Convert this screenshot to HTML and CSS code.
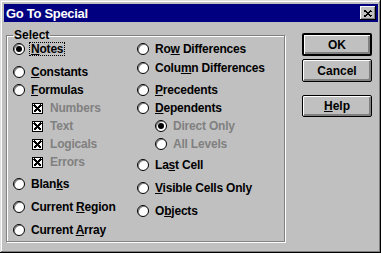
FILE: index.html
```html
<!DOCTYPE html>
<html lang="en">
<head>
    <meta charset="UTF-8">
    <title>Go To Special</title>
    <link rel="stylesheet" href="styles.css">
</head>
<body>
    <div class="window">
        <div class="titlebar">
            <span class="title">Go To Special</span>
            <span class="close-btn">
                <svg width="8" height="7" viewBox="0 0 8 7" shape-rendering="crispEdges">
                    <path d="M0.5 0.5 L7.5 6.5 M7.5 0.5 L0.5 6.5" stroke="#000" stroke-width="1.6" fill="none"/>
                </svg>
            </span>
        </div>

        <div class="client">
            <fieldset class="group">
                <legend>Select</legend>
                <div class="columns">
                    <!-- columna izquierda -->
                    <div class="col col-left">
                        <div class="opt"><span class="radio checked"></span><span class="label focus"><u>N</u>otes</span></div>
                        <div class="opt sp-5"><span class="radio"></span><span class="label"><u>C</u>onstants</span></div>
                        <div class="opt"><span class="radio"></span><span class="label"><u>F</u>ormulas</span></div>
                        <div class="opt sub-check"><span class="check"><svg width="9" height="9" viewBox="0 0 9 9" shape-rendering="crispEdges"><path d="M1 1 L8 8 M8 1 L1 8" stroke="#000" stroke-width="2" fill="none"/></svg></span><span class="label disabled">Numbers</span></div>
                        <div class="opt sub-check"><span class="check"><svg width="9" height="9" viewBox="0 0 9 9" shape-rendering="crispEdges"><path d="M1 1 L8 8 M8 1 L1 8" stroke="#000" stroke-width="2" fill="none"/></svg></span><span class="label disabled">Text</span></div>
                        <div class="opt sub-check"><span class="check"><svg width="9" height="9" viewBox="0 0 9 9" shape-rendering="crispEdges"><path d="M1 1 L8 8 M8 1 L1 8" stroke="#000" stroke-width="2" fill="none"/></svg></span><span class="label disabled">Logicals</span></div>
                        <div class="opt sub-check"><span class="check"><svg width="9" height="9" viewBox="0 0 9 9" shape-rendering="crispEdges"><path d="M1 1 L8 8 M8 1 L1 8" stroke="#000" stroke-width="2" fill="none"/></svg></span><span class="label disabled">Errors</span></div>
                        <div class="opt sp-4"><span class="radio"></span><span class="label">Blan<u>k</u>s</span></div>
                        <div class="opt sp-5"><span class="radio"></span><span class="label">Current <u>R</u>egion</span></div>
                        <div class="opt sp-5"><span class="radio"></span><span class="label">Current <u>A</u>rray</span></div>
                    </div>

                    <!-- columna derecha -->
                    <div class="col col-right">
                        <div class="opt"><span class="radio"></span><span class="label">Ro<u>w</u> Differences</span></div>
                        <div class="opt sp-1"><span class="radio"></span><span class="label">Colu<u>m</u>n Differences</span></div>
                        <div class="opt sp-4"><span class="radio"></span><span class="label"><u>P</u>recedents</span></div>
                        <div class="opt"><span class="radio"></span><span class="label"><u>D</u>ependents</span></div>
                        <div class="opt sub-radio"><span class="radio checked"></span><span class="label disabled">Direct Only</span></div>
                        <div class="opt sub-radio"><span class="radio"></span><span class="label disabled">All Levels</span></div>
                        <div class="opt sp-3"><span class="radio"></span><span class="label">La<u>s</u>t Cell</span></div>
                        <div class="opt sp-5"><span class="radio"></span><span class="label"><u>V</u>isible Cells Only</span></div>
                        <div class="opt sp-5"><span class="radio"></span><span class="label">O<u>b</u>jects</span></div>
                    </div>
                </div>
            </fieldset>

            <div class="buttons">
                <button class="btn default">OK</button>
                <button class="btn">Cancel</button>
                <button class="btn help"><u>H</u>elp</button>
            </div>
        </div>
    </div>
</body>
</html>
```

FILE: styles.css
```css
/* Estilos generales */
body {
    margin: 0;
    padding: 0;
    background-color: #c0c0c0;
    font-family: "Liberation Sans", Arial, sans-serif;
    font-size: 12px;
    font-weight: bold;
    color: #000;
}

/* Ventana */
.window {
    width: 381px;
    height: 253px;
    box-sizing: border-box;
    padding: 4px 3px 3px 4px;
    background-color: #c0c0c0;
    box-shadow: inset -1px -1px 0 #000, inset 1px 1px 0 #dfdfdf,
                inset -2px -2px 0 #808080, inset 2px 2px 0 #fff;
    display: flex;
    flex-direction: column;
}

.titlebar {
    height: 18px;
    background-color: #000080;
    display: flex;
    align-items: center;
    justify-content: space-between;
}

.title {
    color: #fff;
    font-size: 13px;
    letter-spacing: -0.3px;
    padding-left: 2px;
}

.close-btn {
    width: 16px;
    height: 14px;
    margin-right: 2px;
    box-sizing: border-box;
    background-color: #c0c0c0;
    display: flex;
    align-items: center;
    justify-content: center;
    box-shadow: inset -1px -1px 0 #000, inset 1px 1px 0 #fff, inset -2px -2px 0 #808080;
}

/* Area cliente */
.client {
    display: flex;
    align-items: flex-start;
    padding-left: 2px;
}

.group {
    margin: 7px 0 0;
    padding: 0;
    width: 279px;
    height: 213px;
    box-sizing: border-box;
    border: 1px solid #808080;
    box-shadow: 1px 1px 0 #fff, inset 1px 1px 0 #fff;
    min-width: 0;
}

.group legend {
    margin-left: 6px;
    padding: 0 1px;
    line-height: 12px;
}

.columns {
    display: flex;
    margin-top: -1px;
}

.col {
    display: flex;
    flex-direction: column;
}

.col-left {
    width: 124px;
    padding-left: 6px;
}

/* Opciones */
.opt {
    height: 18px;
    display: flex;
    align-items: center;
    white-space: nowrap;
}

.sp-1 { margin-top: 1px; }
.sp-3 { margin-top: 3px; }
.sp-4 { margin-top: 4px; }
.sp-5 { margin-top: 5px; }
.sp-6 { margin-top: 6px; }

.sub-check {
    padding-left: 19px;
}

.sub-radio {
    padding-left: 18px;
}

.radio {
    position: relative;
    width: 12px;
    height: 12px;
    box-sizing: border-box;
    border: 1px solid #000;
    border-radius: 50%;
    background-color: #fff;
    box-shadow: inset 1px 1px 0 #808080;
    margin-right: 4px;
    flex-shrink: 0;
}

.radio.checked::after {
    content: "";
    position: absolute;
    left: 2px;
    top: 2px;
    width: 6px;
    height: 6px;
    border-radius: 50%;
    background-color: #000;
}

.check {
    width: 11px;
    height: 11px;
    box-sizing: border-box;
    border: 1px solid #000;
    background-color: #fff;
    margin-right: 5px;
    display: flex;
    align-items: center;
    justify-content: center;
    flex-shrink: 0;
}

.check svg {
    display: block;
}

.label {
    border: 1px solid transparent;
    padding: 0 1px;
    line-height: 12px;
    letter-spacing: -0.2px;
}

.label.focus {
    border: 1px dotted #000;
}

.disabled {
    color: #808080;
}

/* Botones */
.buttons {
    display: flex;
    flex-direction: column;
    margin-left: 17px;
    padding-top: 11px;
}

.btn {
    width: 70px;
    height: 23px;
    padding: 0;
    font-family: inherit;
    font-size: 12px;
    font-weight: bold;
    color: #000;
    background-color: #c0c0c0;
    border: 1px solid #000;
    border-radius: 2px;
    box-shadow: inset 1px 1px 0 #fff, inset -2px -2px 0 #808080, inset -1px -1px 0 #808080;
    margin-bottom: 3px;
}

.btn.default {
    border-width: 2px;
}

.btn.help {
    margin-top: 10px;
    height: 22px;
}
```
